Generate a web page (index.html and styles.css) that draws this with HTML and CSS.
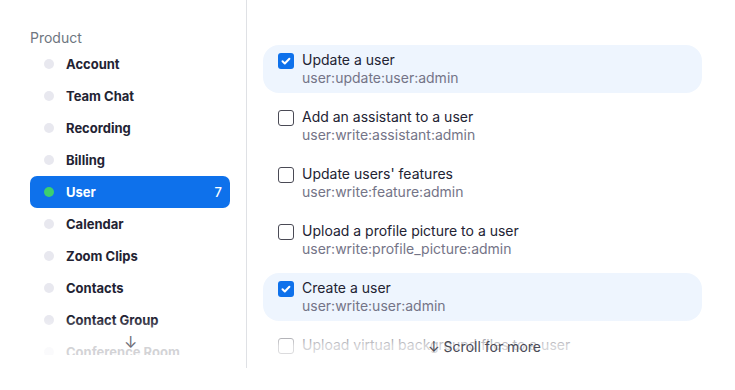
FILE: index.html
```html
<!DOCTYPE html>
<html lang="en">
<head>
  <meta charset="UTF-8">
  <title>Scopes</title>
  <link rel="stylesheet" href="styles.css">
</head>
<body>
  <div class="scopes"> <!-- panel with product list and scope list -->
    <aside class="products">
      <div class="products-title">Product</div>
      <div class="product-list">
        <div class="product"><span class="dot"></span>Account</div>
        <div class="product"><span class="dot"></span>Team Chat</div>
        <div class="product"><span class="dot"></span>Recording</div>
        <div class="product"><span class="dot"></span>Billing</div>
        <div class="product active"><span class="dot"></span>User<span class="count">7</span></div>
        <div class="product"><span class="dot"></span>Calendar</div>
        <div class="product"><span class="dot"></span>Zoom Clips</div>
        <div class="product"><span class="dot"></span>Contacts</div>
        <div class="product"><span class="dot"></span>Contact Group</div>
        <div class="product"><span class="dot"></span>Conference Room</div>
        <div class="product"><span class="dot"></span>Meeting</div>
      </div>
      <div class="fade"></div>
      <div class="more-arrow">↓</div>
    </aside>

    <main class="scope-pane">
      <div class="scope-list">
        <label class="scope checked">
          <span class="box"><svg viewBox="0 0 16 16"><path d="M4.5 8.3l2.3 2.2 4.6-4.8" /></svg></span>
          <span class="scope-text"><span class="scope-name">Update a user</span><span class="scope-id">user:update:user:admin</span></span>
        </label>
        <label class="scope">
          <span class="box"></span>
          <span class="scope-text"><span class="scope-name">Add an assistant to a user</span><span class="scope-id">user:write:assistant:admin</span></span>
        </label>
        <label class="scope">
          <span class="box"></span>
          <span class="scope-text"><span class="scope-name">Update users' features</span><span class="scope-id">user:write:feature:admin</span></span>
        </label>
        <label class="scope">
          <span class="box"></span>
          <span class="scope-text"><span class="scope-name">Upload a profile picture to a user</span><span class="scope-id">user:write:profile_picture:admin</span></span>
        </label>
        <label class="scope checked">
          <span class="box"><svg viewBox="0 0 16 16"><path d="M4.5 8.3l2.3 2.2 4.6-4.8" /></svg></span>
          <span class="scope-text"><span class="scope-name">Create a user</span><span class="scope-id">user:write:user:admin</span></span>
        </label>
        <label class="scope">
          <span class="box"></span>
          <span class="scope-text"><span class="scope-name">Upload virtual background files to a user</span><span class="scope-id">user:write:virtual_background_files:admin</span></span>
        </label>
      </div>
      <div class="fade"></div>
      <div class="scroll-hint">↓ Scroll for more</div>
    </main>
  </div>
</body>
</html>
```

FILE: styles.css
```css
* {
  box-sizing: border-box;
}

body {
  margin: 0;
  background: #fff;
  color: #232333;
  font-family: Inter, "Noto Sans", sans-serif;
}

/* two columns */
.scopes {
  display: flex;
  height: 390px;
}

/* left: product list */
.products {
  position: relative;
  width: 247px;
  flex: none;
  padding: 28px 16px 0 30px;
  height: 368px;
  border-right: 1px solid #dfe1e5;
}

.products-title {
  height: 20px;
  line-height: 20px;
  font-size: 14px;
  color: #6e7680;
}

.product-list {
  height: 307px;
  overflow: hidden;
}

.product {
  display: flex;
  align-items: center;
  height: 32px;
  padding: 0 8px 0 14px;
  border-radius: 7px;
  font-size: 13px;
  font-weight: 700;
  color: #232333;
}

.dot {
  width: 10px;
  height: 10px;
  border-radius: 50%;
  background: #e8e8ef;
  margin-right: 12px;
}

.product.active {
  background: #0e71eb;
  color: #fff;
}

.product.active .dot {
  background: #3ccf6f;
}

.count {
  margin-left: auto;
  font-weight: 500;
}

.fade {
  position: absolute;
  left: 0;
  right: 0;
  top: 318px;
  height: 40px;
  background: linear-gradient(rgba(255, 255, 255, 0), rgba(255, 255, 255, 0.8) 70%);
  pointer-events: none;
}

.more-arrow {
  position: absolute;
  left: 124px;
  top: 332px;
  font-size: 16px;
  color: #6e6e78;
}

/* right: scope list */
.scope-pane {
  position: relative;
  flex: 1;
  padding: 0 33px 0 16px;
}

.scope-list {
  display: flex;
  flex-direction: column;
  gap: 9px;
  height: 357px;
  padding-top: 45px;
  overflow: hidden;
}

.scope {
  display: flex;
  align-items: flex-start;
  gap: 8px;
  padding: 6px 15px;
  border-radius: 16px;
  flex: none;
}

.scope.checked {
  background: #eef5fe;
}

.box {
  width: 16px;
  height: 16px;
  margin-top: 2px;
  border: 1.5px solid #4a4a55;
  border-radius: 3px;
  flex: none;
}

.scope.checked .box {
  border: none;
  background: #0e71eb;
}

.box svg {
  display: block;
  width: 16px;
  height: 16px;
  fill: none;
  stroke: #fff;
  stroke-width: 2;
  stroke-linecap: round;
  stroke-linejoin: round;
}

.scope-text {
  display: flex;
  flex-direction: column;
}

.scope-name {
  font-size: 14px;
  line-height: 18px;
  color: #232333;
}

.scope-id {
  font-size: 14px;
  line-height: 18px;
  color: #747487;
}

.scroll-hint {
  position: absolute;
  left: 181px;
  top: 338px;
  font-size: 14px;
  color: #4a4a55;
}
```
